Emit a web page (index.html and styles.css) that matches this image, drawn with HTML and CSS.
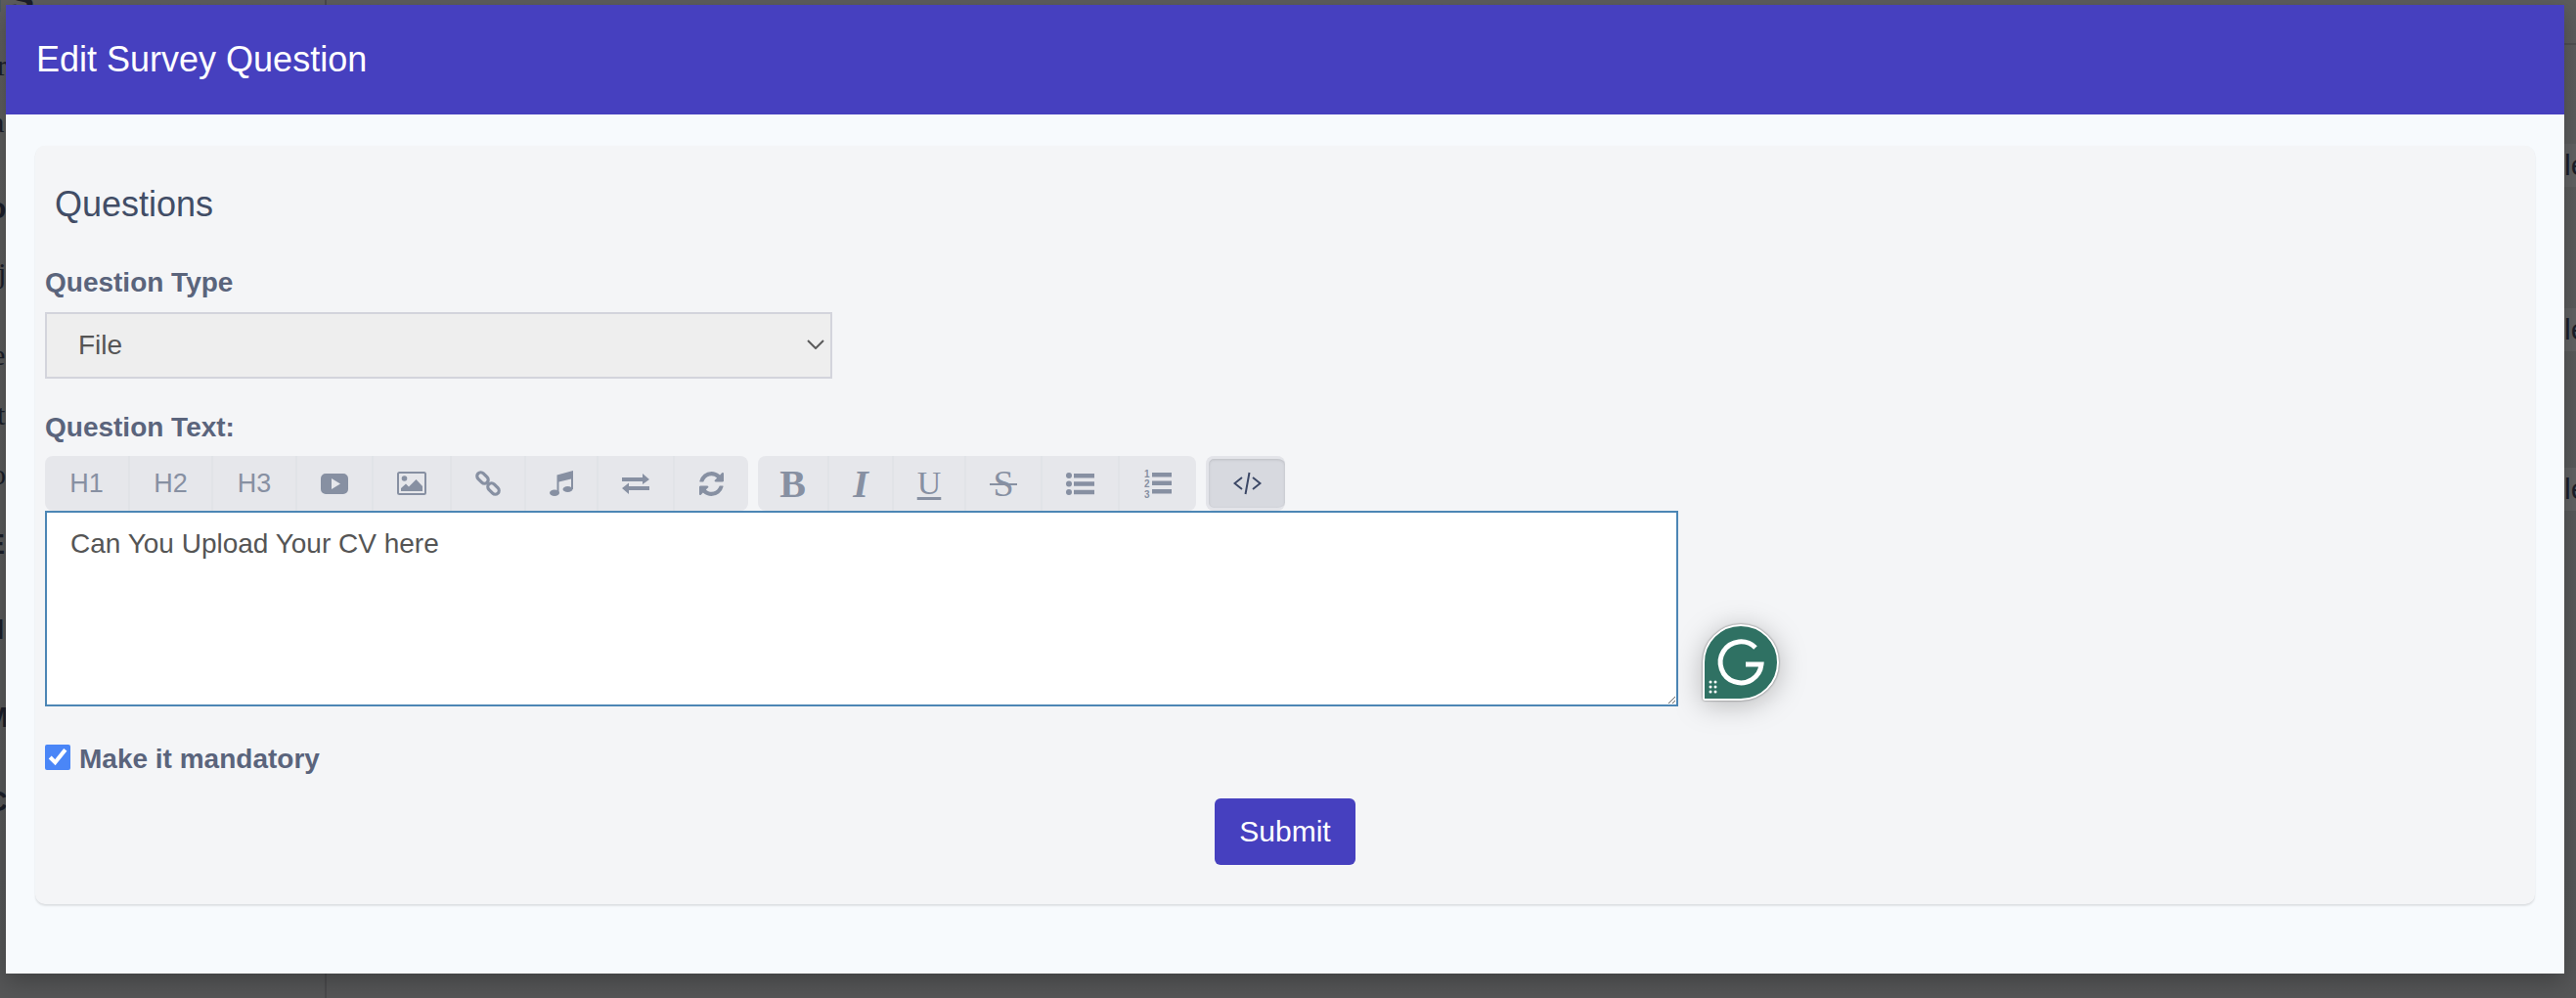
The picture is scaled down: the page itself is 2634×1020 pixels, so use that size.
FILE: index.html
```html
<!DOCTYPE html>
<html lang="en">
<head>
<meta charset="utf-8">
<title>Edit Survey Question</title>
<link rel="stylesheet" href="styles.css">
</head>
<body>
<div class="backdrop">
  <span class="rule-v"></span>
  <span class="rule-h"></span>
  <span class="band band-a"></span>
  <span class="band band-b"></span>
  <span class="band band-c"></span>
  <span class="frag bold f-top">rs</span>
  <span class="frag f1">r</span>
  <span class="frag f2">a</span>
  <span class="frag bold f3">o</span>
  <span class="frag f4">j</span>
  <span class="frag f5">e</span>
  <span class="frag f6">t</span>
  <span class="frag f7">o</span>
  <span class="frag bold f8">E</span>
  <span class="frag bold f9">I</span>
  <span class="frag bold f10">M</span>
  <span class="frag bold f11">C</span>
  <span class="frag r1">le</span>
  <span class="frag r2">le</span>
  <span class="frag r3">le</span>
</div>
<main class="modal">
  <header class="modal-head">Edit Survey Question</header>
  <section class="card">
    <h2 class="card-title">Questions</h2>
    <label class="field-label">Question Type</label>
    <div class="select">
      <span>File</span>
      <svg class="chevron" viewBox="0 0 18 10"><path d="M1 1l8 8 8-8" fill="none" stroke="#5a5a5a" stroke-width="2"/></svg>
    </div>
    <label class="field-label label-text">Question Text:</label>
    <div class="toolbar">
      <div class="group group-a">
        <button class="tool txt">H1</button>
        <button class="tool txt">H2</button>
        <button class="tool txt">H3</button>
        <button class="tool"><svg class="ic" width="28" height="21" viewBox="0 0 28 21"><path fill-rule="evenodd" d="M5 0h18a5 5 0 0 1 5 5v11a5 5 0 0 1-5 5H5a5 5 0 0 1-5-5V5a5 5 0 0 1 5-5zm6 5v11l9-5.500z"/></svg></button>
        <button class="tool"><svg class="ic" width="30" height="24" viewBox="0 0 30 24"><path fill-rule="evenodd" d="M2.500 0h25A2.500 2.500 0 0 1 30 2.500v19a2.500 2.500 0 0 1-2.500 2.500h-25A2.500 2.500 0 0 1 0 21.500v-19A2.500 2.500 0 0 1 2.500 0zm0 2a.5.5 0 0 0-.5.5v19a.5.5 0 0 0 .5.5h25a.5.5 0 0 0 .5-.5v-19a.5.5 0 0 0-.5-.5z"/><circle cx="7.500" cy="7" r="2.800"/><path d="M4 20v-3l5-4.500 3 3 7.500-7.500 6.500 7v5z"/></svg></button>
        <button class="tool"><svg class="ic" width="26" height="26" viewBox="0 0 26 26"><g fill="none" stroke-width="3.200"><rect x="-6.500" y="-3.800" width="13" height="7.600" rx="3.800" transform="translate(7.500 7.500) rotate(45)"/><rect x="-6.500" y="-3.800" width="13" height="7.600" rx="3.800" transform="translate(18.500 18.500) rotate(45)"/></g></svg></button>
        <button class="tool"><svg class="ic" width="24" height="26" viewBox="0 0 24 26"><ellipse cx="5" cy="22.800" rx="5" ry="3.200"/><ellipse cx="18.500" cy="19" rx="5" ry="3"/><path d="M7.500 4.500 24 0v19h-2V8.500L9.500 11.500V23h-2z"/></svg></button>
        <button class="tool"><svg class="ic" width="28" height="21" viewBox="0 0 28 21"><path d="M0 4h21V0l7 6-7 5V8H0zM28 13H7V9.500L0 15l7 6v-4h21z"/></svg></button>
        <button class="tool"><svg class="ic" width="25" height="25" viewBox="128 128 1536 1536"><path d="M1639 1056q0 5-1 7-64 268-268 434.500t-478 166.500q-146 0-282.500-55t-243.500-157l-129 129q-19 19-45 19t-45-19-19-45v-448q0-26 19-45t45-19h448q26 0 45 19t19 45-19 45l-137 137q71 66 161 102t187 36q134 0 250-65t186-179q11-17 53-117 8-23 30-23h192q13 0 22.500 9.500t9.500 22.500zm25-800v448q0 26-19 45t-45 19h-448q-26 0-45-19t-19-45 19-45l138-138q-148-137-349-137-134 0-250 65t-186 179q-11 17-53 117-8 23-30 23h-199q-13 0-22.500-9.500t-9.500-22.500v-7q65-268 270-434.500t480-166.500q146 0 284 55.500t245 156.500l130-129q19-19 45-19t45 19 19 45z"/></svg></button>
      </div>
      <div class="group group-b">
        <button class="tool serif b">B</button>
        <button class="tool serif i">I</button>
        <button class="tool serif u">U</button>
        <button class="tool serif s">S</button>
        <button class="tool"><svg class="ic" width="29" height="23" viewBox="0 0 29 23"><circle cx="3" cy="3" r="3"/><circle cx="3" cy="11.500" r="3"/><circle cx="3" cy="20" r="3"/><path d="M8 1h21v4.500H8zM8 9.300h21v4.500H8zM8 17.700h21v4.500H8z"/></svg></button>
        <button class="tool"><svg class="ic" width="28" height="30" viewBox="0 0 28 30"><text class="ol-num" x="0" y="9">1</text><text class="ol-num" x="0" y="19">2</text><text class="ol-num" x="0" y="29.500">3</text><path d="M8 4h20v4.500H8zM8 12.500h20v4.500H8zM8 21h20v4.500H8z"/></svg></button>
      </div>
      <div class="group group-c">
        <button class="tool active"><svg width="29" height="24" viewBox="0 0 29 24" fill="none" stroke="#3c4866" stroke-width="2"><path d="M9 6l-7.500 6 7.500 6M20 6l7.500 6-7.500 6M16.500 1l-4 22"/></svg></button>
      </div>
    </div>
    <div class="editor-wrap">
      <textarea class="editor" spellcheck="false">Can You Upload Your CV here</textarea>
      <svg class="grammarly" width="80" height="80" viewBox="0 0 80 80">
        <path d="M40 2a38 38 0 0 1 0 76H3.500a1.500 1.500 0 0 1-1.500-1.500V40A38 38 0 0 1 40 2z" fill="#2f7163" stroke="#fff" stroke-width="2"/>
        <path d="M55 25A21 21 0 1 0 61 42H45" fill="none" stroke="#fff" stroke-width="5"/>
        <g fill="#fff"><circle cx="9" cy="60" r="1.500"/><circle cx="14" cy="60" r="1.500"/><circle cx="9" cy="65" r="1.500"/><circle cx="14" cy="65" r="1.500"/><circle cx="9" cy="70" r="1.500"/><circle cx="14" cy="70" r="1.500"/></g>
      </svg>
    </div>
    <label class="check-row">
      <input class="check" type="checkbox" checked>
      <span>Make it mandatory</span>
    </label>
    <div class="actions"><button class="submit">Submit</button></div>
  </section>
</main>
</body>
</html>
```
FILE: styles.css
```css
* { box-sizing: border-box; }
html, body { margin: 0; padding: 0; height: 100%; }
body {
  width: 2634px;
  height: 1020px;
  overflow: hidden;
  position: relative;
  background: linear-gradient(#5d5d5d, #555657);
  font-family: "Liberation Sans", Arial, sans-serif;
}
.backdrop { position: absolute; inset: 0; overflow: hidden; }
.rule-v { position: absolute; left: 332px; top: 0; bottom: 0; width: 2px; background: #4a4a4c; }
.rule-h { position: absolute; left: 2620px; right: 0; top: 44px; height: 2px; background: #505051; }
.band { position: absolute; left: 2620px; right: 0; background: #626263; }
.band-a { top: 147px; height: 44px; }
.band-b { top: 315px; height: 44px; }
.band-c { top: 478px; height: 44px; }
.frag { position: absolute; font-size: 30px; line-height: 34px; color: #1b1e29; font-family: "Liberation Serif", serif; }
.frag.bold { font-weight: 700; font-family: "Liberation Sans", sans-serif; }
.f-top { left: -10px; top: -28px; font-size: 48px; line-height: 48px; }
.f1 { left: -3px; top: 50px; }
.f2 { left: -9px; top: 108px; }
.f3 { left: -12px; top: 196px; }
.f4 { left: -2px; top: 262px; }
.f5 { left: -8px; top: 346px; }
.f6 { left: -3px; top: 407px; }
.f7 { left: -9px; top: 468px; }
.f8 { left: -15px; top: 539px; }
.f9 { left: -4px; top: 626px; }
.f10 { left: -16px; top: 716px; }
.f11 { left: -14px; top: 802px; }
.r1 { left: 2622px; top: 152px; font-family: "Liberation Sans", sans-serif; }
.r2 { left: 2622px; top: 320px; font-family: "Liberation Sans", sans-serif; }
.r3 { left: 2622px; top: 483px; font-family: "Liberation Sans", sans-serif; }

.modal {
  position: absolute;
  left: 6px;
  top: 5px;
  width: 2616px;
  height: 990px;
  background: #f7fafd;
  display: flex;
  flex-direction: column;
  box-shadow: 0 8px 22px rgba(0, 0, 0, .25);
}
.modal-head {
  height: 112px;
  flex: none;
  background: #4640bf;
  color: #fff;
  font-size: 36px;
  line-height: 112px;
  padding-left: 31px;
}
.card {
  margin: 32px 30px 0;
  height: 775px;
  background: #f4f5f7;
  border-radius: 10px;
  box-shadow: 0 2px 2px rgba(0, 0, 0, .1), 0 0 1px rgba(0, 0, 0, .04);
  padding: 0 10px;
  display: flex;
  flex-direction: column;
  align-items: flex-start;
}
.card-title {
  margin: 38px 0 0 10px;
  font-size: 36px;
  line-height: 44px;
  font-weight: 400;
  color: #414d66;
}
.field-label {
  margin-top: 42px;
  font-size: 28px;
  line-height: 32px;
  font-weight: 700;
  color: #5a647c;
}
.select {
  margin-top: 14px;
  width: 805px;
  height: 68px;
  border: 2px solid #d3d4dc;
  background: #eee;
  color: #555;
  font-size: 28px;
  display: flex;
  align-items: center;
  justify-content: space-between;
  padding: 0 6px 0 32px;
}
.chevron { width: 18px; height: 10px; margin-top: -2px; }
.label-text { margin-top: 34px; }
.toolbar { margin-top: 13px; display: flex; gap: 10px; height: 56px; }
.group {
  display: grid;
  height: 56px;
  background: #e6e7eb;
  border-radius: 8px;
  overflow: hidden;
}
.group-a { width: 719px; grid-template-columns: 87px 85px 86px 78px 80px 76px 74px 78px 75px; }
.group-b { width: 448px; grid-template-columns: 73px 66px 74px 78px 79px 78px; }
.group-c { width: 81px; grid-template-columns: 81px; }
.tool {
  border: 0;
  padding: 0;
  margin: 0;
  background: transparent;
  border-right: 2px solid #e1e3e7;
  color: #8790a2;
  display: flex;
  align-items: center;
  justify-content: center;
  font-family: "Liberation Sans", sans-serif;
}
.tool:last-child { border-right: 0; }
.ic { fill: #8790a2; stroke: #8790a2; stroke-width: 0; }
.ic g { stroke: #8790a2; stroke-width: 3.2; }
.txt { font-size: 27px; }
.serif { font-family: "Liberation Serif", serif; font-size: 40px; position: relative; }
.b { font-weight: 700; }
.i { font-style: italic; font-weight: 700; }
.u { font-size: 34px; font-weight: 400; text-decoration: underline; text-underline-offset: 3px; }
.s { font-size: 38px; font-weight: 400; }
.s::after {
  content: "";
  position: absolute;
  left: 50%;
  top: 50%;
  width: 28px;
  height: 2px;
  margin-left: -14px;
  background: #8790a2;
}
.ol-num { font-size: 10px; font-weight: 700; font-family: "Liberation Sans", sans-serif; }
.active {
  background: #d7d9df;
  border: 3px solid #e3e4e9;
  border-radius: 8px;
  box-shadow: inset 0 1px 3px rgba(0, 0, 0, .13);
}
.editor-wrap { position: relative; width: 1670px; height: 200px; flex: none; }
.editor {
  display: block;
  width: 100%;
  height: 100%;
  margin: 0;
  padding: 16px 24px;
  border: 2px solid #4c86b5;
  background: #fff;
  color: #555;
  font-family: "Liberation Sans", sans-serif;
  font-size: 28px;
  line-height: 32px;
  outline: 0;
}
.grammarly {
  position: absolute;
  left: 1694px;
  top: 115px;
  filter: drop-shadow(0 0 1px rgba(0, 0, 0, .5)) drop-shadow(0 4px 14px rgba(0, 0, 0, .25));
}
.check-row {
  margin-top: 38px;
  display: flex;
  align-items: center;
  gap: 9px;
  font-size: 28px;
  line-height: 32px;
  font-weight: 700;
  color: #5a647c;
}
.check { width: 26px; height: 26px; margin: -5px 0 0; accent-color: #4a86f7; }
.actions { width: 100%; display: flex; justify-content: center; margin-top: 24px; }
.submit {
  width: 144px;
  height: 68px;
  border: 0;
  border-radius: 6px;
  background: #4640bf;
  color: #fff;
  font-family: "Liberation Sans", sans-serif;
  font-size: 30px;
}
```
